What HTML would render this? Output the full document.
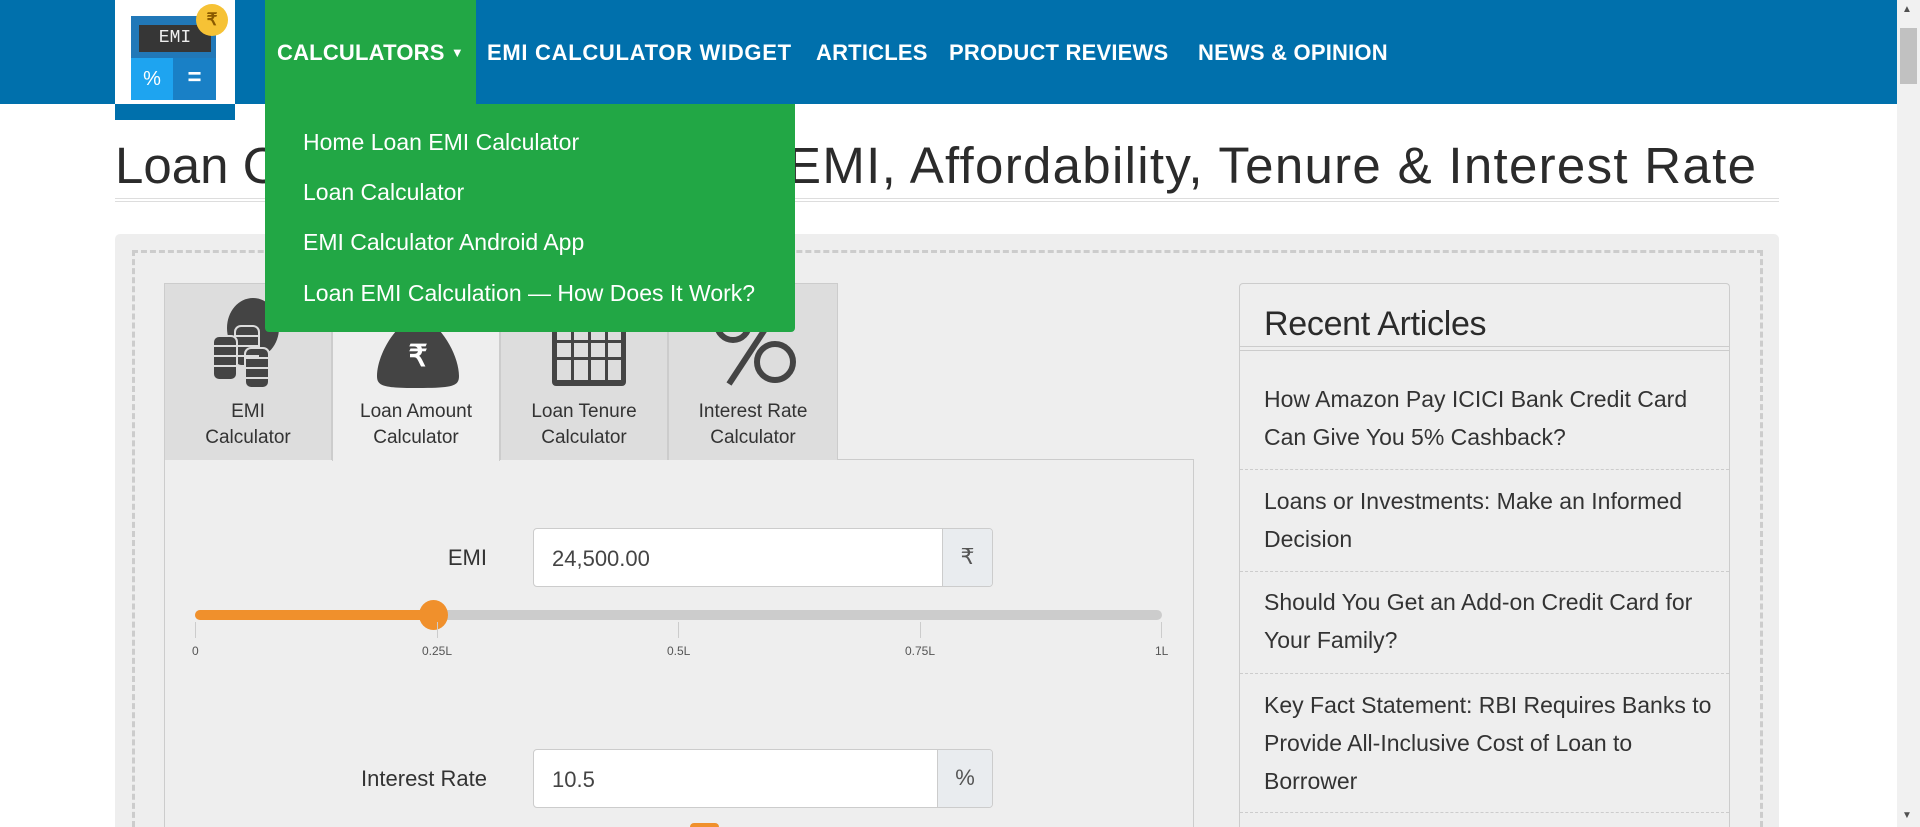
<!DOCTYPE html>
<html><head><meta charset="utf-8"><style>
*{box-sizing:border-box;margin:0;padding:0}
html,body{width:1920px;height:827px;overflow:hidden}
body{background:#fff;font-family:"Liberation Sans",sans-serif;color:#333;position:relative}
.abs{position:absolute}
.nav{left:0;top:0;width:1897px;height:104px;background:#0070ac}
.navt{top:40px;color:#fff;font-weight:bold;font-size:22px;white-space:nowrap;letter-spacing:0.2px}
.dd{left:265px;top:104px;width:530px;height:228px;background:#22a745;border-radius:0 0 4px 4px;z-index:5}
.dd div{position:absolute;left:38px;color:#fff;font-size:23px;white-space:nowrap}
.title{top:136px;font-size:51px;color:#2b2b2b;white-space:nowrap}
.panel{left:115px;top:234px;width:1664px;height:593px;background:#eee;border-radius:5px 5px 0 0}
.tab{top:283px;height:177px;background:#ddd;border:1px solid #ccc;border-bottom:none;text-align:center;font-size:19px;color:#333;line-height:26px}
.tab .lb{position:absolute;left:0;right:0;top:115px}
.lbl{font-size:22px;color:#333;text-align:right;width:300px}
.inp{background:#fff;border:1px solid #ccc;border-radius:4px;overflow:hidden}
.inp span{position:absolute;left:18px;top:17px;font-size:22px;color:#444}
.add{position:absolute;right:0;top:0;bottom:0;background:#e9ecef;border-left:1px solid #ccc;font-size:22px;color:#555;text-align:center;line-height:56px}
.tick{font-size:12px;color:#555;top:644px}
.side{left:1239px;top:283px;width:491px;height:544px;border:1px solid #ccc;border-bottom:none;border-radius:4px 4px 0 0;background:#eee}
.art{position:absolute;left:24px;font-size:23px;line-height:38px;color:#333;width:450px}
.sep{position:absolute;left:0;right:0;border-top:1px dashed #ccc}
</style></head><body>
<div class="abs nav"></div>
<div class="abs" style="left:115px;top:0;width:120px;height:104px;background:#fff"></div>
<div class="abs" style="left:115px;top:104px;width:120px;height:16px;background:#0070ac"></div>
<div class="abs" style="left:131px;top:16px;width:85px;height:42px;background:#2178b8"></div>
<div class="abs" style="left:139px;top:25px;width:72px;height:27px;background:#363636;color:#eee;font-family:'Liberation Mono',monospace;font-size:18px;text-align:center;line-height:27px">EMI</div>
<div class="abs" style="left:131px;top:58px;width:42px;height:42px;background:#1ea4f0;color:#fff;font-size:20px;text-align:center;line-height:42px">%</div>
<div class="abs" style="left:173px;top:58px;width:43px;height:42px;background:#1980c6;color:#fff;font-size:24px;text-align:center;line-height:40px;font-weight:bold">=</div>
<div class="abs" style="left:196px;top:4px;width:32px;height:32px;border-radius:50%;background:#f6c235;color:#8a5a00;font-size:17px;text-align:center;line-height:32px;font-weight:bold">₹</div>
<div class="abs" style="left:265px;top:0;width:211px;height:104px;background:#22a745"></div>
<div class="abs navt" style="left:277px">CALCULATORS <span style="font-size:13px;vertical-align:3px">▼</span></div>
<div class="abs navt" style="left:487px;letter-spacing:0.7px">EMI CALCULATOR WIDGET</div>
<div class="abs navt" style="left:816px">ARTICLES</div>
<div class="abs navt" style="left:949px">PRODUCT REVIEWS</div>
<div class="abs navt" style="left:1198px">NEWS &amp; OPINION</div>
<div class="abs dd">
<div style="top:25px">Home Loan EMI Calculator</div>
<div style="top:75px">Loan Calculator</div>
<div style="top:125px">EMI Calculator Android App</div>
<div style="top:176px">Loan EMI Calculation — How Does It Work?</div>
</div>
<div class="abs title" style="left:115px">Loan Calculator</div>
<div class="abs title" style="left:787px;letter-spacing:1.3px">EMI, Affordability, Tenure &amp; Interest Rate</div>
<div class="abs" style="left:115px;top:198px;width:1664px;height:4px;border-top:1px solid #ddd;border-bottom:1px solid #ddd"></div>
<div class="abs panel"></div>
<div class="abs" style="left:132px;top:250px;width:1631px;height:577px;border:3px dashed #ccc;border-bottom:none"></div>
<div class="abs" style="left:164px;top:459px;width:1030px;height:368px;border:1px solid #ccc;border-bottom:none;background:#eee"></div>
<div class="abs tab" style="left:164px;width:168px"><svg class="abs" style="left:44px;top:14px" width="80" height="90" viewBox="0 0 80 90"><ellipse cx="44" cy="30" rx="26" ry="30" fill="#444"/><g fill="#444" stroke="#ddd" stroke-width="2"><rect x="26" y="28" width="24" height="40" rx="6"/><rect x="4" y="38" width="24" height="44" rx="6"/><rect x="36" y="50" width="24" height="40" rx="6"/></g><g stroke="#ddd" stroke-width="2" fill="none"><path d="M26 38h24M26 48h24M26 58h24M4 48h24M4 58h24M4 68h24M36 60h24M36 70h24M36 80h24"/></g></svg><div class="lb">EMI<br>Calculator</div></div>
<div class="abs tab" style="left:332px;width:168px;background:#eee;height:178px"><svg class="abs" style="left:40px;top:20px" width="90" height="84" viewBox="0 0 90 84"><path d="M30 0h30l-8 14c20 12 34 40 34 58 0 10-6 12-41 12S4 82 4 72C4 54 18 26 38 14z" fill="#444"/><text x="45" y="62" font-size="30" fill="#fff" text-anchor="middle" font-weight="bold" font-family="Liberation Sans,sans-serif">₹</text></svg><div class="lb">Loan Amount<br>Calculator</div></div>
<div class="abs tab" style="left:500px;width:168px"><svg class="abs" style="left:48px;top:16px" width="80" height="88" viewBox="0 0 80 88"><rect x="3" y="2" width="74" height="84" rx="4" fill="#444"/><g fill="#ddd"><rect x="8" y="26" width="14" height="14"/><rect x="25" y="26" width="14" height="14"/><rect x="42" y="26" width="14" height="14"/><rect x="59" y="26" width="13" height="14"/><rect x="8" y="43" width="14" height="14"/><rect x="25" y="43" width="14" height="14"/><rect x="42" y="43" width="14" height="14"/><rect x="59" y="43" width="13" height="14"/><rect x="8" y="60" width="14" height="20"/><rect x="25" y="60" width="14" height="20"/><rect x="42" y="60" width="14" height="20"/><rect x="59" y="60" width="13" height="20"/></g></svg><div class="lb">Loan Tenure<br>Calculator</div></div>
<div class="abs tab" style="left:668px;width:170px"><svg class="abs" style="left:40px;top:16px" width="90" height="88" viewBox="0 0 90 88"><g stroke="#444" stroke-width="6" fill="none"><circle cx="24" cy="24" r="16"/><circle cx="66" cy="62" r="18"/><path d="M70 8L20 84"/></g></svg><div class="lb">Interest Rate<br>Calculator</div></div>
<div class="abs lbl" style="left:187px;top:545px">EMI</div>
<div class="abs inp" style="left:533px;top:528px;width:460px;height:59px"><span>24,500.00</span><div class="add" style="width:50px">₹</div></div>
<div class="abs" style="left:195px;top:610px;width:967px;height:10px;background:#ccc;border-radius:5px"></div>
<div class="abs" style="left:195px;top:610px;width:240px;height:10px;background:#f0902c;border-radius:5px"></div>
<div class="abs" style="left:419px;top:600px;width:29px;height:30px;background:#f0902c;border-radius:50%"></div>
<div class="abs" style="left:195px;top:622px;width:1px;height:16px;background:#ccc"></div>
<div class="abs" style="left:437px;top:622px;width:1px;height:16px;background:#ccc"></div>
<div class="abs" style="left:678px;top:622px;width:1px;height:16px;background:#ccc"></div>
<div class="abs" style="left:920px;top:622px;width:1px;height:16px;background:#ccc"></div>
<div class="abs" style="left:1161px;top:622px;width:1px;height:16px;background:#ccc"></div>
<div class="abs tick" style="left:192px">0</div>
<div class="abs tick" style="left:422px">0.25L</div>
<div class="abs tick" style="left:667px">0.5L</div>
<div class="abs tick" style="left:905px">0.75L</div>
<div class="abs tick" style="left:1155px">1L</div>
<div class="abs lbl" style="left:187px;top:766px">Interest Rate</div>
<div class="abs inp" style="left:533px;top:749px;width:460px;height:59px"><span>10.5</span><div class="add" style="width:55px">%</div></div>
<div class="abs" style="left:690px;top:823px;width:29px;height:4px;background:#f0902c;border-radius:14px 14px 0 0"></div>
<div class="abs side">
<div class="abs" style="left:24px;top:21px;font-size:34px;color:#2b2b2b;letter-spacing:-0.3px">Recent Articles</div>
<div class="abs" style="left:0;right:0;top:62px;height:5px;border-top:1px solid #ccc;border-bottom:1px solid #ccc"></div>
<div class="art" style="top:96px">How Amazon Pay ICICI Bank Credit Card Can Give You 5% Cashback?</div>
<div class="sep" style="top:185px"></div>
<div class="art" style="top:198px">Loans or Investments: Make an Informed Decision</div>
<div class="sep" style="top:287px"></div>
<div class="art" style="top:299px">Should You Get an Add-on Credit Card for Your Family?</div>
<div class="sep" style="top:389px"></div>
<div class="art" style="top:402px">Key Fact Statement: RBI Requires Banks to Provide All-Inclusive Cost of Loan to Borrower</div>
<div class="sep" style="top:528px"></div>
</div>
<div class="abs" style="left:1897px;top:0;width:23px;height:827px;background:#f1f1f1"></div>
<div class="abs" style="left:1900px;top:28px;width:17px;height:56px;background:#c1c1c1"></div>
<div class="abs" style="left:1902px;top:4px;font-size:10px;color:#505050">▲</div>
<div class="abs" style="left:1902px;top:810px;font-size:10px;color:#505050">▼</div>
</body></html>
